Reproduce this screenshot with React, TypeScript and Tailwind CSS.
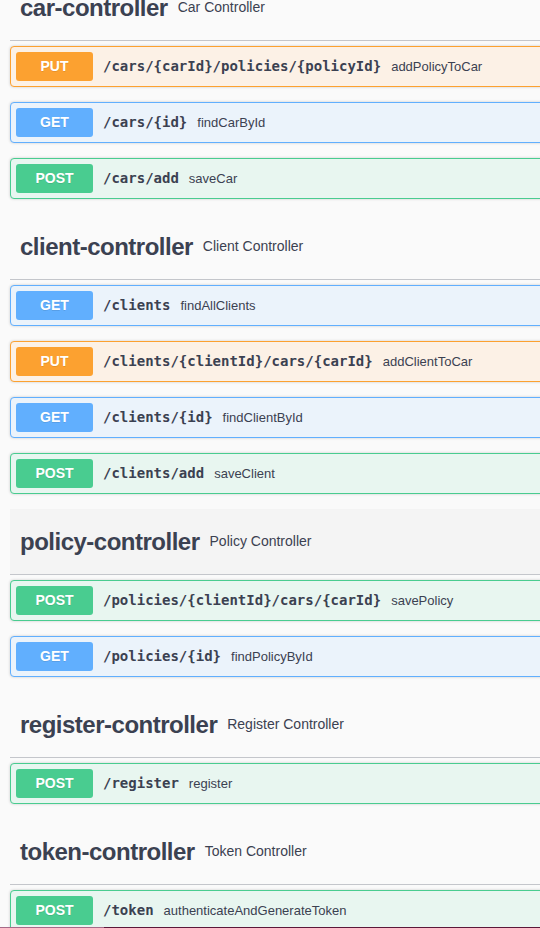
import React from "react";

type Method = "GET" | "POST" | "PUT";

interface Op {
  method: Method;
  path: string;
  summary: string;
}

interface Tag {
  name: string;
  description: string;
  hovered?: boolean;
  ops: Op[];
}

const tags: Tag[] = [
  {
    name: "car-controller",
    description: "Car Controller",
    ops: [
      { method: "PUT", path: "/cars/{carId}/policies/{policyId}", summary: "addPolicyToCar" },
      { method: "GET", path: "/cars/{id}", summary: "findCarById" },
      { method: "POST", path: "/cars/add", summary: "saveCar" },
    ],
  },
  {
    name: "client-controller",
    description: "Client Controller",
    ops: [
      { method: "GET", path: "/clients", summary: "findAllClients" },
      { method: "PUT", path: "/clients/{clientId}/cars/{carId}", summary: "addClientToCar" },
      { method: "GET", path: "/clients/{id}", summary: "findClientById" },
      { method: "POST", path: "/clients/add", summary: "saveClient" },
    ],
  },
  {
    name: "policy-controller",
    description: "Policy Controller",
    hovered: true,
    ops: [
      { method: "POST", path: "/policies/{clientId}/cars/{carId}", summary: "savePolicy" },
      { method: "GET", path: "/policies/{id}", summary: "findPolicyById" },
    ],
  },
  {
    name: "register-controller",
    description: "Register Controller",
    ops: [{ method: "POST", path: "/register", summary: "register" }],
  },
  {
    name: "token-controller",
    description: "Token Controller",
    ops: [{ method: "POST", path: "/token", summary: "authenticateAndGenerateToken" }],
  },
];

const blockStyles: Record<Method, { block: string; badge: string }> = {
  GET: { block: "border-[#61affe] bg-[#ebf3fb]", badge: "bg-[#61affe]" },
  POST: { block: "border-[#49cc90] bg-[#e8f6f0]", badge: "bg-[#49cc90]" },
  PUT: { block: "border-[#fca130] bg-[#fcf1e6]", badge: "bg-[#fca130]" },
};

const OpBlock: React.FC<{ op: Op }> = ({ op }) => {
  const s = blockStyles[op.method];
  return (
    <div
      className={`flex items-center h-[41px] px-[5px] mb-[15px] border rounded-[4px] shadow-[0_0_3px_rgba(0,0,0,0.19)] ${s.block}`}
    >
      <span
        className={`flex items-center justify-center w-[77px] h-[29px] shrink-0 rounded-[3px] text-white text-[14px] font-bold [text-shadow:0_1px_0_rgba(0,0,0,0.1)] ${s.badge}`}
      >
        {op.method}
      </span>
      <span className="pl-[10px] pr-[10px] text-[14px] font-bold text-[#3b4151] whitespace-nowrap font-['DejaVu_Sans_Mono',monospace]">
        {op.path}
      </span>
      <span className="text-[13px] text-[#3b4151] whitespace-nowrap">{op.summary}</span>
    </div>
  );
};

const TagSection: React.FC<{ tag: Tag; first?: boolean }> = ({ tag, first }) => (
  <section>
    <h3
      className={`flex items-center h-[66px] pl-[10px] mb-[5px] border-b border-[#c4c6cb] text-[#3b4151] ${
        tag.hovered ? "bg-[#f4f4f4]" : ""
      } ${first ? "-mt-[25px]" : ""}`}
    >
      <span className="text-[24px] font-bold tracking-[-0.5px]">{tag.name}</span>
      <small className="ml-[10px] text-[14px] font-normal">{tag.description}</small>
    </h3>
    {tag.ops.map((op) => (
      <OpBlock key={op.method + op.path} op={op} />
    ))}
  </section>
);

export default function App() {
  return (
    <div className="flex flex-col w-[540px] h-[928px] overflow-hidden bg-[#fafafa] font-['Liberation_Sans',Arial,sans-serif]">
      <div className="flex-1 overflow-hidden">
        <div className="w-[620px] pl-[10px]">
          {tags.map((tag, i) => (
            <TagSection key={tag.name} tag={tag} first={i === 0} />
          ))}
        </div>
      </div>
      <div className="flex h-px shrink-0">
        <div className="w-[104px] bg-[#a66a88]" />
        <div className="flex-1 bg-[#5c1839]" />
      </div>
    </div>
  );
}
